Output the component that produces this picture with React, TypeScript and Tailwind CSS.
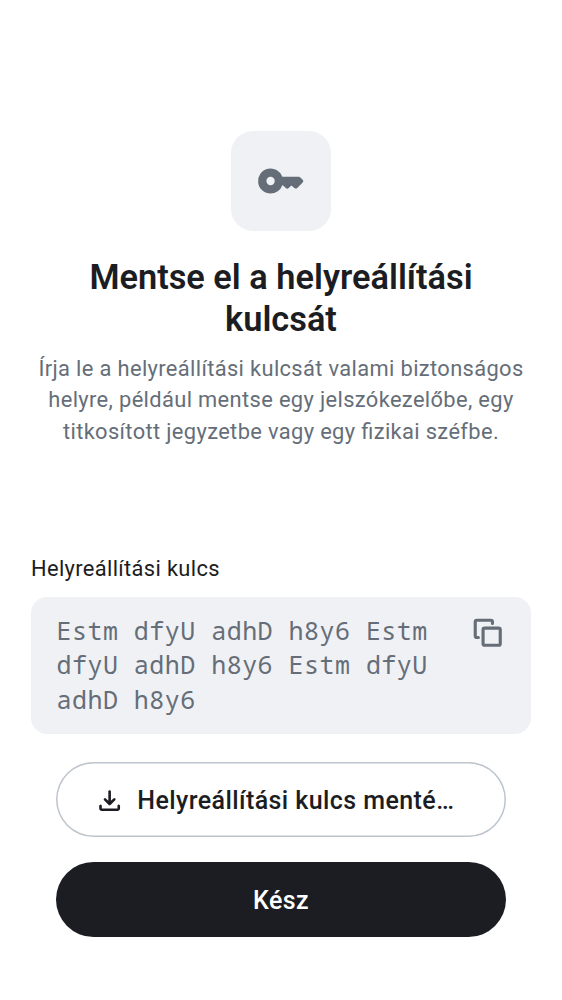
export default function App() {
  return (
    <main className="flex h-[1000px] w-[562px] flex-col bg-white px-[31px] pt-[131px] font-['Roboto',sans-serif] text-[#1b1d22]">
      <header className="flex flex-col items-center text-center">
        <div className="flex size-[100px] items-center justify-center rounded-[22px] bg-[#f0f1f5] text-[#656e78]">
          <svg viewBox="0 0 24 24" className="size-[50px]" fill="currentColor">
            <path
              fillRule="evenodd"
              d="M7 18a6 6 0 1 1 5.65-8h7.85q.5 0 .8.3l1.1 1.1q.3.3.3.65t-.3.65l-2.6 2.6q-.7.6-1.4 0L17 14.1l-1.3 1.3q-.7.6-1.4 0L13 14.1l-.35-.1A6 6 0 0 1 7 18m0-4a2 2 0 1 0 0-4 2 2 0 0 0 0 4"
            />
          </svg>
        </div>
        <h1 className="mt-[25px] w-[450px] text-[34.375px] leading-[42px] font-semibold">
          Mentse el a helyreállítási kulcsát
        </h1>
        <p className="mt-[13px] text-[21.875px] leading-[31.25px] tracking-[0.36px] text-[#656e78] [font-feature-settings:'liga'_1]">
          Írja le a helyreállítási kulcsát valami biztonságos helyre, például mentse egy jelszókezelőbe, egy
          titkosított jegyzetbe vagy egy fizikai széfbe.
        </p>
      </header>
      <section className="mt-[106px]">
        <h2 className="text-[21.875px] leading-[31.25px] tracking-[0.35px]">Helyreállítási kulcs</h2>
        <div className="mt-[13px] flex h-[137px] items-start justify-between rounded-[16px] bg-[#f0f1f5] pt-[16px] pr-[25px] pl-[25.5px] text-[#656e78]">
          <p className="w-[385px] font-['Noto_Sans_Mono','DejaVu_Sans_Mono',monospace] text-[25px] leading-[34.25px] tracking-[0.47px]">
            Estm dfyU adhD h8y6 Estm dfyU adhD h8y6 Estm dfyU adhD h8y6
          </p>
          <svg viewBox="0 0 24 24" className="mt-[1.25px] size-[37.5px]" fill="currentColor">
            <path d="M14 5H5v9h1a1 1 0 1 1 0 2H5a2 2 0 0 1-2-2V5a2 2 0 0 1 2-2h9a2 2 0 0 1 2 2v1a1 1 0 1 1-2 0z" />
            <path d="M8 10a2 2 0 0 1 2-2h9a2 2 0 0 1 2 2v9a2 2 0 0 1-2 2h-9a2 2 0 0 1-2-2zm2 0v9h9v-9z" />
          </svg>
        </div>
      </section>
      <div className="mt-[28.25px] flex flex-col gap-[25px] px-[25px]">
        <button className="flex h-[75px] items-center rounded-full px-[38px] pt-px text-[25px] font-medium tracking-[0.42px] shadow-[inset_0_0_0_1.5px_#bdc4cc]">
          <svg viewBox="0 0 24 24" className="mr-[12px] size-[31.25px] shrink-0" fill="currentColor">
            <path d="M12 15.575q-.2 0-.375-.062a.9.9 0 0 1-.325-.213l-3.6-3.6a.95.95 0 0 1-.288-.7q0-.425.288-.7.274-.275.712-.287.438-.014.713.262L11 12.15V5q0-.424.287-.713A.97.97 0 0 1 12 4q.424 0 .713.287Q13 4.576 13 5v7.15l1.875-1.875q.274-.274.713-.263.437.014.712.288a.95.95 0 0 1 .287.7.95.95 0 0 1-.287.7l-3.6 3.6q-.15.15-.325.212a1.1 1.1 0 0 1-.375.063M6 20q-.824 0-1.412-.587A1.93 1.93 0 0 1 4 18v-2q0-.424.287-.713A.97.97 0 0 1 5 15q.424 0 .713.287Q6 15.576 6 16v2h12v-2q0-.424.288-.713A.97.97 0 0 1 19 15q.424 0 .712.287.288.288.288.713v2q0 .824-.587 1.413A1.93 1.93 0 0 1 18 20z" />
          </svg>
          <span className="whitespace-nowrap">Helyreállítási kulcs menté…</span>
        </button>
        <button className="h-[75px] rounded-full bg-[#1b1d22] pt-px text-[25px] font-medium tracking-[0.42px] text-white">
          Kész
        </button>
      </div>
    </main>
  );
}
